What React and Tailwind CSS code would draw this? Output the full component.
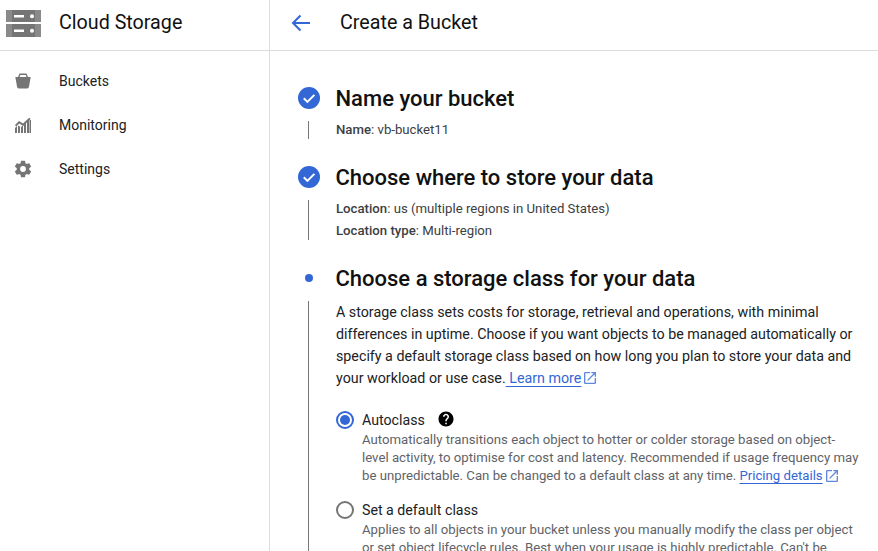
import React from "react";

const Ext = ({ className }) => (
  <svg viewBox="0 0 24 24" className={className} fill="#5f86e0">
    <path d="M19 19H5V5h7V3H5a2 2 0 0 0-2 2v14a2 2 0 0 0 2 2h14a2 2 0 0 0 2-2v-7h-2v7zM14 3v2h3.59l-9.83 9.83 1.41 1.41L19 6.41V10h2V3h-7z" />
  </svg>
);

const Check = () => (
  <svg viewBox="0 0 22 22" className="w-[22px] h-[22px] shrink-0">
    <circle cx="11" cy="11" r="11" fill="#3367d6" />
    <path d="M5.8 11.3l3.6 3.6 7-7" fill="none" stroke="#fff" strokeWidth="2" />
  </svg>
);

const Nav = ({ icon, label }) => (
  <div className="h-11 flex items-center">
    <div className="w-[59px] pl-[15px] flex items-center">{icon}</div>
    <span className="text-sm text-[#202124]">{label}</span>
  </div>
);

export default function App() {
  return (
    <div className="w-[878px] h-[551px] overflow-hidden flex bg-white font-['Roboto',sans-serif]">
      <aside className="w-[270px] shrink-0 border-r border-[#dadce0]">
        <div className="h-[51px] border-b border-[#dadce0] flex items-center">
          <div className="w-[59px] pl-[6px] flex items-center pb-[3px]">
            <svg viewBox="0 0 35 27" className="w-[35px] h-[27px]">
              <path fill="#757575" d="M0 0h35v12H0zM0 14h35v13H0z" />
              <path fill="#9a9a9a" d="M0 0h6v12H0zM29 0h6v12h-6zM0 14h6v13H0zM29 14h6v13h-6z" opacity=".55" />
              <path fill="#fff" d="M8 5h10v2.600H8zM8 19.500h10v2.600H8z" />
              <circle cx="26" cy="6.200" r="2" fill="#fff" />
              <circle cx="26" cy="20.700" r="2" fill="#fff" />
            </svg>
          </div>
          <span className="text-[19.7px] text-[#111] pb-1">Cloud Storage</span>
        </div>
        <nav className="pt-2">
          <Nav
            label="Buckets"
            icon={
              <svg viewBox="0 0 16 16" className="w-4 h-4">
                <path
                  fill="#757575"
                  fillRule="evenodd"
                  d="M4.500 0.500h7L13 4h2.700L14 13.500c-.2 1-.8 2-2 2H4c-1.200 0-1.800-1-2-2L.3 4H3zM5.300 2.100L4.600 4h6.800l-.7-1.900z"
                />
              </svg>
            }
          />
          <Nav
            label="Monitoring"
            icon={
              <svg viewBox="0 0 16 16" className="w-4 h-4" fill="#757575">
                <path d="M0 16v-5l2-2v7zM3 16V8.500l2 1V16zM6 16v-6l2-1.500V16zM9 16V7.500l2-2V16zM12 16V4.500l2-2V16zM14.500 16V3h1.500v13z" />
                <path d="M0 8l4-4 4 2.500L14.200 .8 15.600 2 8.200 9 4.200 6.500 1.200 9.500z" />
              </svg>
            }
          />
          <Nav
            label="Settings"
            icon={
              <svg viewBox="0 0 24 24" className="w-5 h-5 -ml-0.5" fill="#757575">
                <path d="M19.430 12.980c.04-.32.07-.64.07-.98s-.03-.66-.07-.98l2.110-1.650c.19-.15.24-.42.12-.64l-2-3.460c-.12-.22-.39-.3-.61-.22l-2.490 1c-.52-.4-1.080-.73-1.690-.98l-.38-2.650A.488.488 0 0 0 14 2h-4c-.25 0-.46.18-.49.42l-.38 2.650c-.61.25-1.170.59-1.690.98l-2.490-1c-.23-.09-.49 0-.61.22l-2 3.460c-.13.22-.07.49.12.64l2.110 1.650c-.04.32-.07.65-.07.98s.03.66.07.98l-2.110 1.650c-.19.15-.24.42-.12.64l2 3.460c.12.22.39.3.61.22l2.490-1c.52.4 1.080.73 1.690.98l.38 2.650c.03.24.24.42.49.42h4c.25 0 .46-.18.49-.42l.38-2.650c.61-.25 1.170-.59 1.690-.98l2.490 1c.23.09.49 0 .61-.22l2-3.460c.12-.22.07-.49-.12-.64l-2.110-1.650zM12 15.500a3.500 3.500 0 1 1 0-7 3.500 3.500 0 0 1 0 7z" />
              </svg>
            }
          />
        </nav>
      </aside>

      <main className="flex-1 min-w-0">
        <div className="h-[51px] border-b border-[#dadce0] flex items-center">
          <div className="w-[70px] pl-[21px] flex items-center pb-[5px]">
            <svg viewBox="0 0 20 18" className="w-5 h-[18px]">
              <path d="M19 9H2M9.500 1.500L2 9l7.500 7.500" fill="none" stroke="#3367d6" strokeWidth="2" />
            </svg>
          </div>
          <span className="text-[19.7px] text-[#111] pb-1">Create a Bucket</span>
        </div>

        <div className="pl-7 pt-[33px] pr-[18px]">
          <div className="flex items-center h-7">
            <div className="w-[37.5px] shrink-0"><Check /></div>
            <h2 className="text-[22px] font-medium text-[#111]">Name your bucket</h2>
          </div>
          <div className="flex mt-[9px]">
            <div className="w-[21px] mr-[17px] flex justify-center h-[18px]">
              <div className="w-px bg-[#757575]" />
            </div>
            <p className="text-[13.2px] leading-[18px] text-[#3c4043]">
              <span className="font-medium">Name</span>: vb-bucket11
            </p>
          </div>

          <div className="flex items-center h-7 mt-6">
            <div className="w-[37.5px] shrink-0"><Check /></div>
            <h2 className="text-[22px] font-medium text-[#111]">Choose where to store your data</h2>
          </div>
          <div className="flex mt-[7px]">
            <div className="w-[21px] mr-[17px] flex justify-center pt-[2px] pb-[2px]">
              <div className="w-px bg-[#757575]" />
            </div>
            <div className="text-[13.2px] leading-[22px] text-[#3c4043]">
              <p><span className="font-medium">Location</span>: us (multiple regions in United States)</p>
              <p><span className="font-medium">Location type</span>: Multi-region</p>
            </div>
          </div>

          <div className="flex items-center h-7 mt-[22px]">
            <div className="w-[21px] mr-[16.5px] flex justify-center">
              <div className="w-2 h-2 rounded-full bg-[#3367d6]" />
            </div>
            <h2 className="text-[22px] font-medium text-[#111]">Choose a storage class for your data</h2>
          </div>
          <div className="flex mt-[9px]">
            <div className="w-[21px] mr-[17px] flex justify-center">
              <div className="w-px bg-[#757575]" />
            </div>
            <div className="flex-1 min-w-0">
              <p className="text-[14.28px] leading-[22px] text-[#202124]">
                A storage class sets costs for storage, retrieval and operations, with minimal differences in uptime.
                Choose if you want objects to be managed automatically or specify a default storage class based on how
                long you plan to store your data and your workload or use case.
                <a className="text-[#3367d6] underline underline-offset-[3px]"> Learn more</a>
                <Ext className="inline-block w-4 h-4 ml-px -mt-0.5" />
              </p>

              <div className="flex mt-[22px]">
                <div className="w-[26px] shrink-0">
                  <span className="w-[18px] h-[18px] rounded-full border-2 border-[#3367d6] flex items-center justify-center">
                    <span className="w-2.5 h-2.5 rounded-full bg-[#3367d6]" />
                  </span>
                </div>
                <div className="min-w-0">
                  <div className="flex items-center h-5">
                    <span className="text-[14.2px] text-[#202124]">Autoclass</span>
                    <svg viewBox="0 0 24 24" className="w-[18px] h-[18px] ml-3 -mt-1" fill="#000">
                      <path d="M12 2C6.480 2 2 6.480 2 12s4.480 10 10 10 10-4.480 10-10S17.520 2 12 2zm1 17h-2v-2h2v2zm2.070-7.750l-.9.920C13.450 12.900 13 13.500 13 15h-2v-.5c0-1.100.45-2.100 1.170-2.830l1.240-1.260c.37-.36.59-.86.59-1.410 0-1.100-.9-2-2-2s-2 .9-2 2H8c0-2.210 1.790-4 4-4s4 1.790 4 4c0 .88-.36 1.680-.93 2.250z" />
                    </svg>
                  </div>
                  <p className="text-[13.2px] leading-[18px] text-[#5f6368]">
                    Automatically transitions each object to hotter or colder storage based on object-level activity, to
                    optimise for cost and latency. Recommended if usage frequency may be unpredictable. Can be changed
                    to a default class at any time. <a className="text-[#3367d6] underline underline-offset-[3px]">Pricing details</a>
                    <Ext className="inline-block w-4 h-4 ml-px -mt-0.5" />
                  </p>
                </div>
              </div>

              <div className="flex mt-4">
                <div className="w-[26px] shrink-0">
                  <span className="block w-[18px] h-[18px] rounded-full border-2 border-[#757575]" />
                </div>
                <div className="min-w-0">
                  <div className="flex items-center h-5">
                    <span className="text-[14.2px] text-[#202124]">Set a default class</span>
                  </div>
                  <p className="text-[13.2px] leading-[18px] text-[#5f6368]">
                    Applies to all objects in your bucket unless you manually modify the class per object or set object
                    lifecycle rules. Best when your usage is highly predictable. Can't be changed to Autoclass once the
                    bucket is created.
                  </p>
                </div>
              </div>
            </div>
          </div>
        </div>
      </main>
    </div>
  );
}
